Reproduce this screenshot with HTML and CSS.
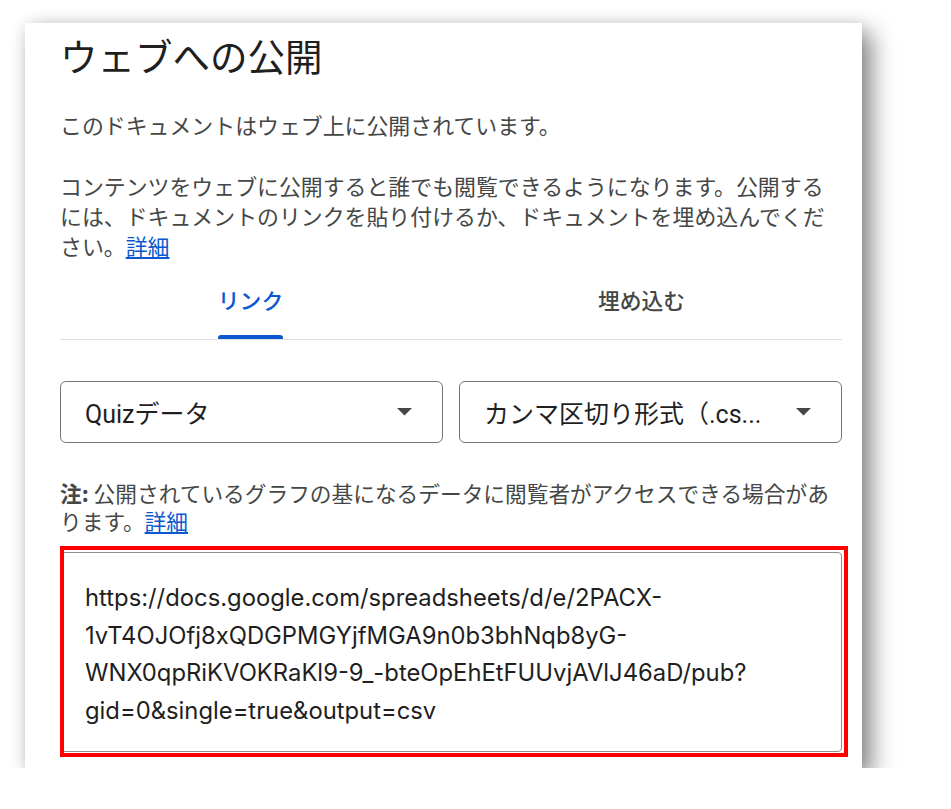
FILE: index.html
```html
<!DOCTYPE html>
<html lang="ja">
<head>
<meta charset="utf-8">
<title>ウェブへの公開</title>
<link rel="stylesheet" href="styles.css">
</head>
<body>
  <div class="dialog">
    <h1 class="dialog-title">ウェブへの公開</h1>
    <p class="text">このドキュメントはウェブ上に公開されています。</p>
    <p class="text text-gap">コンテンツをウェブに公開すると誰でも閲覧できるようになります。公開するには、ドキュメントのリンクを貼り付けるか、ドキュメントを埋め込んでください。<a class="link" href="#">詳細</a></p>

    <div class="tabs">
      <div class="tab tab-active"><span class="tab-label">リンク</span></div>
      <div class="tab"><span class="tab-label">埋め込む</span></div>
    </div>

    <div class="selects">
      <div class="select">
        <span class="select-value">Quizデータ</span>
        <svg class="caret" width="15" height="8" viewBox="0 0 15 8"><path d="M0 0h15L7.5 7.5z"/></svg>
      </div>
      <div class="select">
        <span class="select-value">カンマ区切り形式（.cs...</span>
        <svg class="caret" width="15" height="8" viewBox="0 0 15 8"><path d="M0 0h15L7.5 7.5z"/></svg>
      </div>
    </div>

    <p class="note"><b>注:</b> 公開されているグラフの基になるデータに閲覧者がアクセスできる場合があります。<a class="link" href="#">詳細</a></p>

    <div class="url-wrap">
      <div class="url-box">https://docs.google.com/spreadsheets/d/e/2PACX-<br>1vT4OJOfj8xQDGPMGYjfMGA9n0b3bhNqb8yG-<br>WNX0qpRiKVOKRaKl9-9_-bteOpEhEtFUUvjAVlJ46aD/pub?<br>gid=0&amp;single=true&amp;output=csv</div>
      <div class="highlight"></div>
    </div>
  </div>
</body>
</html>
```

FILE: styles.css
```css
html, body {
  margin: 0;
  background: #ffffff;
}

body {
  padding: 23px 0 0 25px;
  font-family: "Noto Sans CJK JP", sans-serif;
  color: #444746;
}

.dialog {
  width: 837px;
  box-sizing: border-box;
  padding: 8px 20px 16px 35px;
  background: #ffffff;
  box-shadow: 10px 10px 22px rgba(0, 0, 0, 0.45), 0 0 14px rgba(0, 0, 0, 0.10);
}

.dialog-title {
  margin: 0;
  font-size: 37.5px;
  font-weight: 400;
  line-height: 48px;
  color: #1f1f1f;
}

.text {
  margin: 31px 0 0;
  width: 782px;
  font-size: 21.9px;
  line-height: 30px;
}

.text-gap {
  margin-top: 31px;
}

.link {
  color: #0b57d0;
  text-decoration: underline;
}

.tabs {
  display: flex;
  width: 782px;
  border-bottom: 1px solid #e0e0e0;
}

.tab {
  flex: 1;
  height: 78px;
  display: flex;
  justify-content: center;
  align-items: center;
  padding-right: 10px;
  font-size: 21.8px;
  font-weight: 500;
  color: #444746;
}

.tab-label {
  position: relative;
  height: 78px;
  line-height: 78px;
}

.tab-active {
  color: #0b57d0;
}

.tab-active .tab-label::after {
  content: "";
  position: absolute;
  left: 0;
  right: 0;
  bottom: 0;
  height: 4px;
  border-radius: 3px 3px 0 0;
  background: #0b57d0;
}

.selects {
  display: flex;
  gap: 16px;
  width: 782px;
  margin-top: 41px;
}

.select {
  flex: 1;
  height: 62px;
  box-sizing: border-box;
  border: 1px solid #747775;
  border-radius: 6px;
  display: flex;
  align-items: center;
  padding: 0 30px 0 24px;
  font-family: "Roboto", "Noto Sans CJK JP", sans-serif;
  font-size: 25px;
  color: #1f1f1f;
}

.select-value {
  flex: 1;
  white-space: nowrap;
  overflow: hidden;
}

.caret {
  fill: #444746;
  flex: none;
}

.note {
  margin: 36px 0 0;
  width: 782px;
  font-size: 21.7px;
  line-height: 28px;
}

.note b {
  font-weight: 700;
  color: #444746;
}

.url-wrap {
  position: relative;
  width: 782px;
  margin-top: 17px;
}

.url-box {
  height: 200px;
  box-sizing: border-box;
  border: 1px solid #8e8e8e;
  border-radius: 4px;
  padding: 26px 20px 0 24px;
  font-family: "Inter", "Roboto", sans-serif;
  font-size: 23.8px;
  line-height: 37.5px;
  color: #1f1f1f;
  white-space: nowrap;
}

/* red frame drawn over the URL field */
.highlight {
  position: absolute;
  left: 0;
  top: -6px;
  width: 788px;
  height: 211px;
  box-sizing: border-box;
  border: 4px solid #ff0000;
  pointer-events: none;
}
```
